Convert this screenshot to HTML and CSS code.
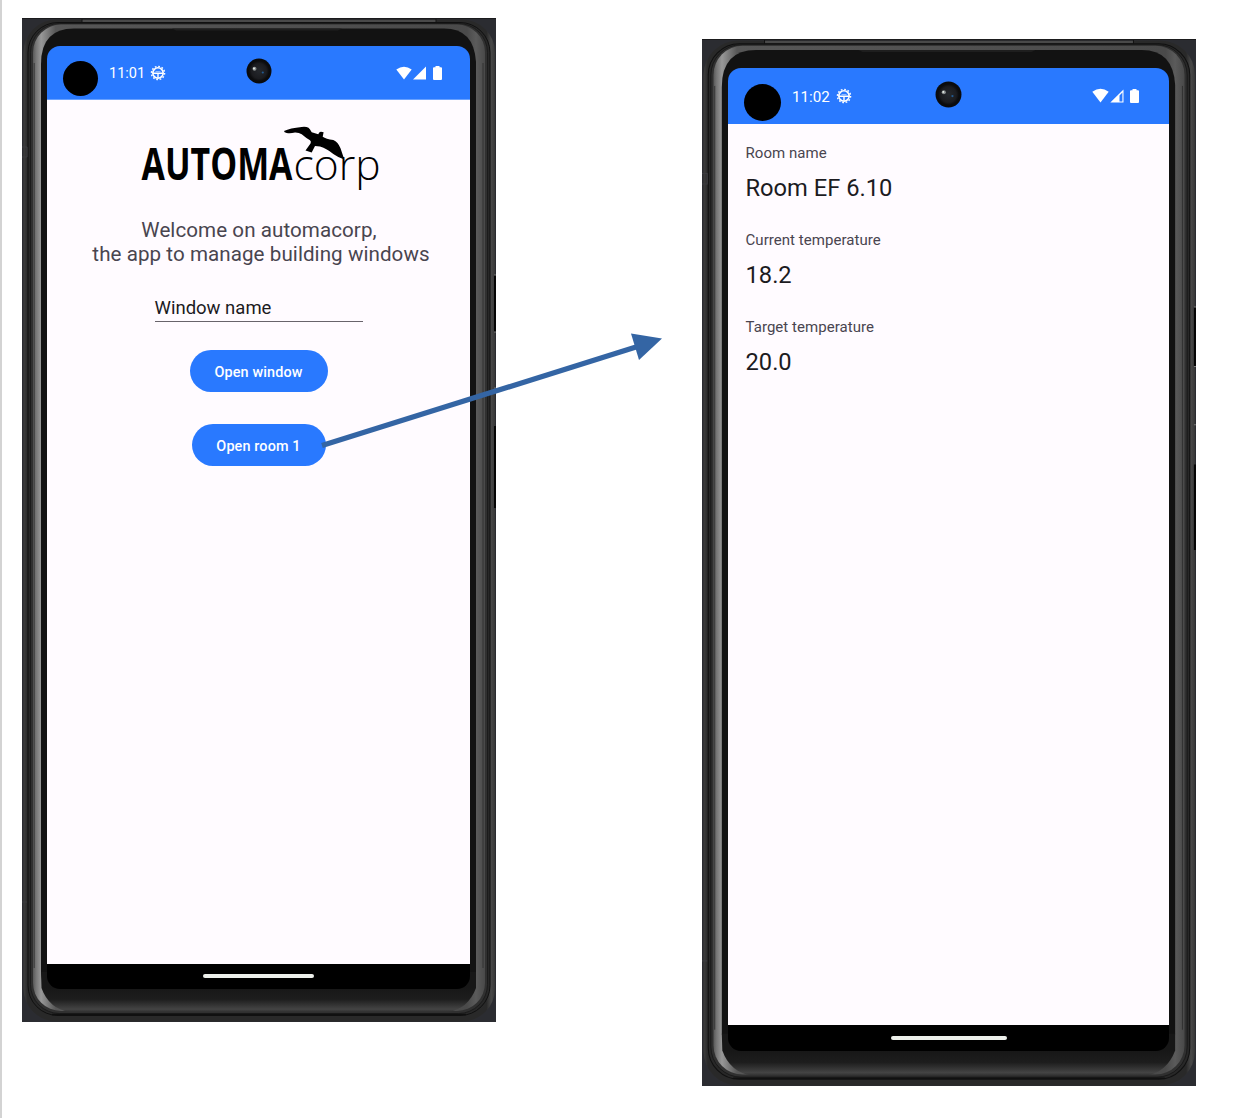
FILE: index.html
```html
<!DOCTYPE html>
<html lang="en">
<head>
<meta charset="utf-8">
<title>Automacorp</title>
<link rel="stylesheet" href="styles.css">
</head>
<body>
<svg class="defs" width="0" height="0" aria-hidden="true">
  <defs>
    <linearGradient id="edge" gradientUnits="userSpaceOnUse" x1="0" y1="0" x2="474" y2="0">
      <stop offset="0" stop-color="#464646"/><stop offset=".012" stop-color="#292929"/>
      <stop offset=".98" stop-color="#292929"/><stop offset=".99" stop-color="#484848"/><stop offset="1" stop-color="#333"/>
    </linearGradient>
    <linearGradient id="shine" gradientUnits="userSpaceOnUse" x1="11" y1="0" x2="463" y2="0">
      <stop offset="0" stop-color="#585858"/><stop offset=".007" stop-color="#777"/><stop offset=".018" stop-color="#989898"/>
      <stop offset=".05" stop-color="#575757"/><stop offset=".96" stop-color="#4a4a4a"/><stop offset=".98" stop-color="#5b5b5b"/><stop offset="1" stop-color="#494949"/>
    </linearGradient>
    <linearGradient id="chin" gradientUnits="userSpaceOnUse" x1="0" y1="970" x2="0" y2="995">
      <stop offset="0" stop-color="#171717"/><stop offset=".45" stop-color="#1d1d1d"/><stop offset=".85" stop-color="#444"/><stop offset="1" stop-color="#282828"/>
    </linearGradient>
    <radialGradient id="lens" cx=".5" cy=".5" r=".5">
      <stop offset="0" stop-color="#25282d"/><stop offset=".6" stop-color="#1b1c20"/><stop offset=".8" stop-color="#0b0c0e"/><stop offset="1" stop-color="#090a0c"/>
    </radialGradient>
    <symbol id="frame" viewBox="0 0 474 1004" preserveAspectRatio="none">
      <rect width="474" height="1004" fill="#2b2c31"/>
      <path d="M0 .5H474" stroke="#1b1b1d"/>
      <rect x="1.5" y="1.5" width="471.5" height="1002" rx="33" fill="url(#edge)"/>
      <path d="M60 3H414" stroke="#494949" stroke-width="2"/>
      <path d="M60 1v4M414 1v4" stroke="#141414"/>
      <rect x="6" y="4.500" width="462" height="993" rx="30" fill="#282828" stroke="#101010" stroke-width="1"/>
      <rect x="8.500" y="5.500" width="457" height="990" rx="29" fill="#303030" stroke="#161616" stroke-width=".8"/>
      <rect x="11" y="6.500" width="452" height="986.500" rx="28" fill="url(#shine)"/>
      <path d="M12.200 45V950M461 45V950" stroke="#2c2c2c" stroke-width=".8"/>
      <path d="M19 46Q19 10.500 52 10.500H422Q452 10.500 454 44V954Q450 991 420 993H54Q22 991 19 954Z" fill="#121212"/>
      <path d="M19 954L19.500 970Q27 991 48 994H426Q446 991 454 970V954Z" fill="url(#chin)"/>
      <path d="M150 10.500H320L316 12.500H154Z" fill="#1e1e1e"/>
      <path d="M30 996.500H444" stroke="#101010" stroke-width="1.500"/>
      <path d="M474 257V314M474 408V490" stroke="#050505" stroke-width="4"/>
      <path d="M472 257h2M472 314h2M472 370h2" stroke="#777"/>
      <path d="M0 129h5v10H0M0 884h5" fill="none" stroke="#3c3c40"/>
    </symbol>
    <symbol id="cam" viewBox="0 0 26 26">
      <circle cx="13" cy="13" r="12.500" fill="url(#lens)"/>
      <circle cx="8.500" cy="10.800" r="2" fill="#878b8d"/><circle cx="8" cy="10.500" r=".9" fill="#eef7ee"/>
      <circle cx="16.800" cy="14.500" r="1.100" fill="#235a91"/>
    </symbol>
    <symbol id="gear" viewBox="0 0 16 16">
      <circle cx="8" cy="8" r="6.600" fill="none" stroke="#fff" stroke-width="1.400" stroke-dasharray="1.728 1.728"/>
      <circle cx="8" cy="8" r="5.200" fill="none" stroke="#fff" stroke-width="1.600"/>
      <path d="M3 8.200H13M8 8.200V13" fill="none" stroke="#fff" stroke-width="1.400"/>
      <path d="M5.500 6.500h5" stroke="#a9caff" stroke-width=".8"/>
    </symbol>
    <symbol id="wifi" viewBox="0 0 16 14"><path d="M.3 3.500Q8-2.200 15.700 3.500L8 13.500Z" fill="#fff"/></symbol>
    <symbol id="cell" viewBox="0 0 14 14"><path d="M13 .5V13.500H0Z" fill="#fff"/></symbol>
    <symbol id="cell-low" viewBox="0 0 14 14"><path fill-rule="evenodd" d="M13.500 .5V13.500H.3ZM12.400 3.500L9.500 6.500V12.500H12.400Z" fill="#fff"/></symbol>
    <symbol id="battery" viewBox="0 0 9 14"><path d="M2.500 0H6.500V1.300H8Q9 1.300 9 2.300V13Q9 14 8 14H1Q0 14 0 13V2.300Q0 1.300 1 1.300H2.500Z" fill="#fff"/></symbol>
  </defs>
</svg>
<main class="board">
  <section class="phone phone-home">
    <svg class="frame"><use href="#frame"/></svg>
    <div class="screen">
      <header class="status">
        <span class="hole"></span><span class="time">11:01</span>
        <svg class="gear"><use href="#gear"/></svg>
        <svg class="cam"><use href="#cam"/></svg>
        <svg class="wifi"><use href="#wifi"/></svg><svg class="cell"><use href="#cell"/></svg><svg class="battery"><use href="#battery"/></svg>
      </header>
      <div class="content home">
        <svg class="logo" viewBox="0 0 242 66">
          <text class="logo-bold" x="2.500" y="55.500" textLength="151" lengthAdjust="spacingAndGlyphs">AUTOMA</text>
          <text class="logo-light" x="154.500" y="56" textLength="87" lengthAdjust="spacingAndGlyphs">corp</text>
          <path d="M145 7Q151 4 162.700 3Q167 2.500 169.500 3.700Q171 5 172.700 8.300L179.300 10.300Q180 7.500 182 7.700L184.600 8.300L183.700 12.700Q187 15 194.300 16Q199 18 201.500 24.300L205.300 35.500Q200 34 194.300 30Q188 24.500 181 22.500L176 22L172.700 28.500L166.500 26.500L171.500 19.500Q172.500 17.500 171 16.300Q167 14 162.700 10.300Q160 8.500 156 8.600Q151 9.800 147.700 9Q145 8.500 145 7Z"/>
        </svg>
        <p class="welcome"><span class="line-a">Welcome on automacorp,</span><br><span class="line-b">the app to manage building windows</span></p>
        <div class="field">Window name</div>
        <button class="btn btn-window">Open window</button>
        <button class="btn btn-room">Open room 1</button>
      </div>
      <footer class="nav"><span class="handle"></span></footer>
    </div>
  </section>
  <section class="phone phone-room">
    <svg class="frame"><use href="#frame"/></svg>
    <div class="screen">
      <header class="status">
        <span class="hole"></span><span class="time">11:02</span>
        <svg class="gear"><use href="#gear"/></svg>
        <svg class="cam"><use href="#cam"/></svg>
        <svg class="wifi"><use href="#wifi"/></svg><svg class="cell"><use href="#cell-low"/></svg><svg class="battery"><use href="#battery"/></svg>
      </header>
      <dl class="content room">
        <dt>Room name</dt><dd>Room EF 6.10</dd>
        <dt>Current temperature</dt><dd>18.2</dd>
        <dt>Target temperature</dt><dd>20.0</dd>
      </dl>
      <footer class="nav"><span class="handle"></span></footer>
    </div>
  </section>
  <svg class="arrow" viewBox="0 0 350 130"><path d="M10 115.500L324 17" stroke="#3465a4" stroke-width="5.300"/><path d="M319 3.500L350 8.500L327 30Z" fill="#3465a4"/></svg>
</main>
</body>
</html>
```

FILE: styles.css
```css
* { box-sizing: border-box; }
body { margin: 0; background: #fff; font-family: Roboto, "Liberation Sans", sans-serif; overflow: hidden; }
.defs { position: absolute; }
.board { position: relative; display: flex; align-items: flex-start; gap: 206px; height: 1118px; padding: 18px 0 0 20px; border-left: 2px solid #d3d3d3; }
.phone { position: relative; flex: none; }
.phone-home { width: 474px; height: 1004px; padding: 28px 26px 33px 25px; }
.phone-room { width: 494px; height: 1047px; margin-top: 21px; padding: 29px 27px 35px 26px; }
.frame { position: absolute; inset: 0; width: 100%; height: 100%; }
.screen { position: relative; display: flex; flex-direction: column; height: 100%; overflow: hidden; border-radius: 13px; }
.status { flex: none; display: flex; align-items: flex-start; background: #2979ff; color: #fff; }
.status > * { flex: none; }
.hole { border-radius: 50%; background: #000; }
.content { flex: 1; margin: 0; background: #fffbff; }
.nav { flex: none; display: flex; justify-content: center; background: #000; }
.handle { height: 4px; border-radius: 2px; background: #edf0eb; }

.phone-home .status { height: 54px; padding-left: 16px; border-bottom: 1px solid #68a1ff; }
.phone-home .hole { width: 35px; height: 35px; margin-top: 15px; }
.phone-home .time { width: 42px; margin: 19px 0 0 11px; font-size: 14.5px; line-height: 18px; }
.phone-home .gear { width: 16px; height: 16px; margin: 19px 1px 0 -1px; }
.phone-home .cam { width: 26px; height: 26px; margin: 12px 0 0 79px; }
.phone-home .wifi { width: 16px; height: 14px; margin: 20px 0 0 124px; }
.phone-home .cell { width: 14px; height: 14px; margin: 20px 0 0 1px; }
.phone-home .battery { width: 9px; height: 14px; margin: 20px 0 0 6px; }
.phone-home .nav { height: 25px; padding-top: 10px; }
.phone-home .handle { width: 111px; }

.home { display: flex; flex-direction: column; align-items: center; }
.logo { width: 242px; height: 66px; margin: 24px 0 0 3px; overflow: visible; }
.logo-bold { font: 700 45px "Open Sans", sans-serif; }
.logo-light { font: 300 42px "Open Sans", sans-serif; }
.welcome { margin: 28px 0 0 5px; font-size: 20.6px; line-height: 24.5px; letter-spacing: .06px; color: #49454f; text-align: center; white-space: nowrap; }
.line-a { margin-right: 4px; }
.line-b { position: relative; top: -.5px; }
.field { width: 208px; height: 29px; margin-top: 26px; border-bottom: 1px solid #68646b; font-size: 18.5px; line-height: 30px; color: #1c1b1f; }
.btn { height: 42px; padding: 3px 0 0; border: 0; border-radius: 21px; background: #2979ff; color: #fff; font: 500 14.4px/39px Roboto, sans-serif; letter-spacing: .13px; }
.btn-window { width: 138px; margin-top: 28px; }
.btn-room { width: 134px; margin-top: 32px; }

.phone-room .status { height: 56px; padding-left: 16px; }
.phone-room .hole { width: 37px; height: 37px; margin-top: 16px; }
.phone-room .time { width: 43px; margin: 20px 0 0 11px; font-size: 15.2px; line-height: 19px; }
.phone-room .gear { width: 16px; height: 16px; margin: 20px 0 0 1px; }
.phone-room .cam { width: 27px; height: 27px; margin: 13px 0 0 83px; }
.phone-room .wifi { width: 17px; height: 15px; margin: 20px 0 0 130px; }
.phone-room .cell { width: 14px; height: 14px; margin: 21px 0 0 1px; }
.phone-room .battery { width: 9px; height: 14px; margin: 21px 0 0 6px; }
.phone-room .nav { height: 26px; padding-top: 11px; }
.phone-room .handle { width: 116px; }

.room { padding: 18px 17px; }
.room dt { height: 21px; padding-left: .5px; font-size: 15px; line-height: 22px; letter-spacing: .05px; color: #49454f; }
.room dd { height: 30px; margin: 10px 0 26.2px .5px; font-size: 23.7px; line-height: 30px; color: #1c1b1f; }
.arrow { position: absolute; left: 310px; top: 330px; width: 350px; height: 130px; }
```
